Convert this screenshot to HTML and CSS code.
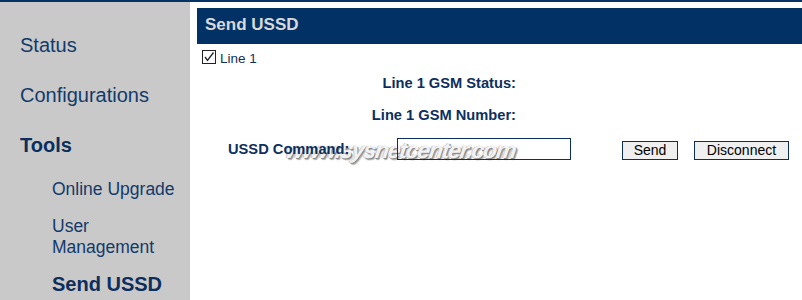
FILE: index.html
```html
<!DOCTYPE html>
<html>
<head>
<meta charset="utf-8">
<link rel="stylesheet" href="styles.css">
</head>
<body>
<div class="page">
  <nav class="sidebar">
    <div class="nav-item">Status</div>
    <div class="nav-item">Configurations</div>
    <div class="nav-item bold">Tools</div>
    <div class="sub">
      <div class="sub-item">Online Upgrade</div>
      <div class="sub-item">User Management</div>
      <div class="sub-item bold">Send USSD</div>
    </div>
  </nav>
  <main class="main">
    <div class="title">Send USSD</div>
    <div class="line-row">
      <span class="check"><svg width="14" height="14" viewBox="0 0 14 14"><rect x="0.5" y="0.5" width="13" height="13" fill="#fff" stroke="#222" stroke-width="1"/><polyline points="3,7 5.5,10.5 11.5,2.5" fill="none" stroke="#222" stroke-width="1.3"/></svg></span>
      <span class="line-label">Line 1</span>
    </div>
    <div class="info-row">Line 1 GSM Status:</div>
    <div class="info-row">Line 1 GSM Number:</div>
    <div class="cmd-row">
      <span class="watermark">www.sysnetcenter.com</span>
      <span class="cmd-label">USSD Command:</span>
      <span class="cmd-input"></span>
      <span class="btn btn-send">Send</span>
      <span class="btn btn-disc">Disconnect</span>
    </div>
  </main>
</div>
</body>
</html>
```

FILE: styles.css
```css
html, body {
  margin: 0;
  padding: 0;
  background: #fff;
  font-family: "Liberation Sans", Arial, sans-serif;
  color: #0d2f5e;
}
.page {
  display: flex;
  border-top: 2px solid #063265;
  height: 298px;
  overflow: hidden;
}
.sidebar {
  width: 190px;
  flex: none;
  background: #c9c9c9;
  padding-top: 18px;
  box-sizing: border-box;
}
.nav-item {
  height: 50px;
  line-height: 50px;
  padding-left: 20px;
  font-size: 20px;
  color: #123a6b;
}
.bold { font-weight: bold; color: #0b2e5c; }
.sub {
  padding: 9px 8px 0 52px;
}
.sub-item {
  font-size: 17.5px;
  line-height: 21px;
  margin-bottom: 16px;
  color: #123a6b;
}
.sub-item.bold { font-size: 20px; color: #0b2e5c; }
.main {
  flex: 1;
  padding: 6px 0 0 7px;
}
.title {
  height: 36px;
  line-height: 34px;
  background: #023165;
  color: #d9d9d9;
  font-weight: bold;
  font-size: 17px;
  padding-left: 8px;
}
.line-row {
  display: flex;
  align-items: center;
  height: 20px;
  margin-top: 3px;
  padding-left: 5px;
}
.check { display: flex; width: 14px; height: 14px; }
.line-label {
  font-size: 13.5px;
  margin-left: 4px;
  margin-top: 2px;
}
.info-row {
  width: 319px;
  text-align: right;
  font-weight: bold;
  font-size: 14.67px;
  height: 32px;
  line-height: 32px;
}
.info-row:first-of-type { margin-top: 3px; }
.cmd-row {
  position: relative;
  display: flex;
  align-items: center;
  height: 32px;
  margin-top: 2px;
  padding-left: 31px;
}
.cmd-label {
  position: relative;
  z-index: 1;
  font-weight: bold;
  font-size: 14.67px;
  width: 169px;
}
.cmd-input {
  position: relative;
  z-index: 1;
  width: 172px;
  height: 20px;
  border: 1px solid #0d2f5e;
  margin-top: -1px;
}
.btn {
  height: 17px;
  line-height: 17px;
  border: 1px solid #0d2f5e;
  background: #efefef;
  color: #000;
  font-size: 14px;
  text-align: center;
  box-sizing: content-box;
  margin-top: 2px;
}
.btn-send { width: 54px; margin-left: 51px; }
.btn-disc { width: 93px; margin-left: 16px; }
.watermark {
  position: absolute;
  left: 89px;
  top: 4px;
  font-size: 23px;
  letter-spacing: -1.2px;
  font-weight: bold;
  font-style: italic;
  color: #f2f2f2;
  text-shadow: 1px 1px 0 #8a8a8a, -1px 0 0 #c8c8c8, 2px 2px 1px #b0b0b0;
  transform: skewX(-8deg);
  white-space: nowrap;
  pointer-events: none;
}
```
